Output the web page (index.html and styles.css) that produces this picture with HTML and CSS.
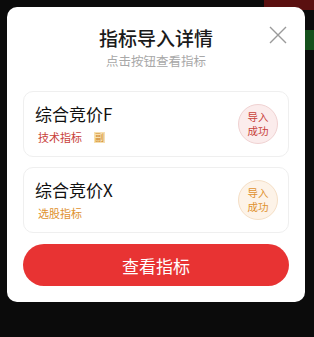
FILE: index.html
```html
<!DOCTYPE html>
<html lang="zh-CN">
<head>
<meta charset="UTF-8">
<meta name="viewport" content="width=device-width, initial-scale=1.0">
<title>指标导入详情</title>
<link rel="stylesheet" href="styles.css">
</head>
<body>

<div class="screen">
  <!-- 背景行情 -->
  <div class="bg-red"></div>
  <div class="bg-green"></div>

  <div class="dialog">
    <div class="dialog-head">
      <h3>指标导入详情</h3>
      <p class="sub">点击按钮查看指标</p>
      <span class="close">
        <svg width="18" height="18" viewBox="0 0 18 18"><path d="M1 1L17 17M17 1L1 17" stroke="#9a9a9a" stroke-width="1.4" fill="none"/></svg>
      </span>
    </div>

    <div class="card">
      <div class="card-info">
        <div class="card-name">综合竞价F</div>
        <div class="tags">
          <span class="tag tag-red">技术指标</span>
          <span class="tag-mini">副</span>
        </div>
      </div>
      <div class="badge badge-red">导入<br>成功</div>
    </div>

    <div class="card">
      <div class="card-info">
        <div class="card-name">综合竞价X</div>
        <div class="tags">
          <span class="tag tag-orange">选股指标</span>
        </div>
      </div>
      <div class="badge badge-orange">导入<br>成功</div>
    </div>

    <button class="button">查看指标</button>
  </div>
</div>

</body>
</html>
```

FILE: styles.css
```css
body, h3, p {
  margin: 0;
  padding: 0;
}
body {
  font-family: "Noto Sans CJK SC", "Noto Sans", sans-serif;
  background: #0b0b0b;
}
.screen {
  position: relative;
  width: 314px;
  height: 337px;
  padding: 7px;
  box-sizing: border-box;
  background: #0b0b0b;
  overflow: hidden;
}
.bg-red {
  position: absolute;
  top: 0;
  right: 0;
  width: 50px;
  height: 10px;
  background: #5a1010;
}
.bg-green {
  position: absolute;
  top: 30px;
  right: 0;
  width: 9px;
  height: 20px;
  background: #14501c;
}
.dialog {
  position: relative;
  width: 298px;
  height: 295px;
  background: #fff;
  border-radius: 10px;
  padding: 18px 16px 0;
  box-sizing: border-box;
  display: flex;
  flex-direction: column;
}
.dialog-head {
  text-align: center;
  margin-bottom: 21px;
}
.dialog-head h3 {
  font-size: 19px;
  font-weight: 500;
  color: #1a1a1a;
  line-height: 26px;
}
.sub {
  font-size: 12.5px;
  color: #a8a8a8;
  line-height: 18px;
  margin-top: 1px;
}
.close {
  position: absolute;
  top: 19px;
  right: 18px;
  width: 18px;
  height: 18px;
}
.close svg {
  display: block;
}
.card {
  display: flex;
  align-items: center;
  justify-content: space-between;
  height: 66px;
  border: 1px solid #efefef;
  border-radius: 10px;
  padding: 0 10px 0 11px;
  box-sizing: border-box;
  margin-bottom: 10px;
}
.card-name {
  font-size: 17px;
  color: #111;
  line-height: 22px;
}
.tags {
  display: flex;
  align-items: center;
  gap: 12px;
  margin-top: 4px;
  padding-left: 3px;
}
.tag {
  font-size: 11px;
  line-height: 16px;
}
.tag-red {
  color: #c8413a;
}
.tag-orange {
  color: #e0912e;
}
.tag-mini {
  font-size: 9px;
  line-height: 11px;
  padding: 0 1px;
  color: #d28a2a;
  background: #f6dfb0;
}
.badge {
  width: 40px;
  height: 40px;
  border-radius: 50%;
  display: flex;
  align-items: center;
  justify-content: center;
  text-align: center;
  font-size: 10.5px;
  line-height: 14px;
  box-sizing: border-box;
}
.badge-red {
  background: #fbecec;
  border: 1px solid #f0d2d2;
  color: #c8413a;
}
.badge-orange {
  background: #fdf3e8;
  border: 1px solid #f5dfc6;
  color: #e0912e;
}
.button {
  margin-top: 1px;
  height: 42px;
  border: none;
  border-radius: 21px;
  background: #e83333;
  color: #fff;
  font-family: inherit;
  font-size: 17px;
  cursor: pointer;
}
```
